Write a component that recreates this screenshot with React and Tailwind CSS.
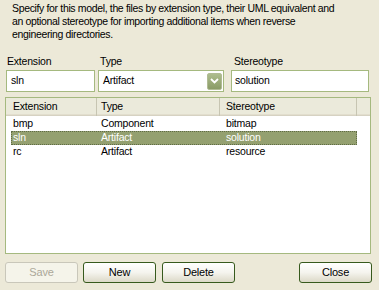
const ROWS = [
  { ext: "bmp", type: "Component", stereo: "bitmap" },
  { ext: "sln", type: "Artifact", stereo: "solution", selected: true },
  { ext: "rc", type: "Artifact", stereo: "resource" },
];

const XpButton = ({ children, disabled, className = "" }) => (
  <button
    type="button"
    className={`h-[21px] w-[73px] rounded-[3px] border text-[11px] leading-none ${
      disabled
        ? "border-[#c9c7ba] bg-[#f5f4ea] text-[#aca899]"
        : "border-[#375a1d] bg-gradient-to-b from-[#ffffff] via-[#f5f4ee] to-[#dcd9c8] text-black"
    } ${className}`}
  >
    {children}
  </button>
);

const Chevron = () => (
  <svg width="9" height="6" viewBox="0 0 9 6">
    <path d="M1 1 L4.5 4.5 L8 1" fill="none" stroke="#ffffff" strokeWidth="1.8" />
  </svg>
);

export default function App() {
  return (
    <div
      className="relative h-[290px] w-[379px] overflow-hidden bg-[#ece9d8] text-[10.5px] tracking-[-0.2px] text-black"
      style={{ fontFamily: '"Liberation Sans", Arial, sans-serif' }}
    >
      {/* Description */}
      <p className="pl-[12px] pt-[2px] leading-[13px] tracking-[-0.35px]">
        Specify for this model, the files by extension type, their UML equivalent and
        <br />
        an optional stereotype for importing additional items when reverse
        <br />
        engineering directories.
      </p>

      {/* Fields */}
      <div className="mt-[14px] flex pl-[6px]">
        <div className="w-[89px]">
          <div className="pl-[1px] leading-[13px]">Extension</div>
          <div className="mt-[2px] flex h-[22px] items-center border border-[#a5b97f] bg-white pl-[4px]">
            sln
          </div>
        </div>
        <div className="ml-[3px] w-[126px]">
          <div className="pl-[2px] leading-[13px]">Type</div>
          <div className="mt-[2px] flex h-[22px] items-center justify-between border border-[#a5b97f] bg-white pl-[4px] pr-px">
            <span>Artifact</span>
            <span className="flex h-[17px] w-[15px] items-center justify-center rounded-[2px] border border-[#b0bb94] bg-gradient-to-b from-[#aebd8e] to-[#8a9b66]">
              <Chevron />
            </span>
          </div>
        </div>
        <div className="ml-[7px] w-[138px]">
          <div className="pl-[3px] leading-[13px]">Stereotype</div>
          <div className="mt-[2px] flex h-[22px] items-center border border-[#a5b97f] bg-white pl-[3px]">
            solution
          </div>
        </div>
      </div>

      {/* List */}
      <div className="ml-[5px] mt-[5px] h-[157px] w-[366px] border border-[#a5b97f] bg-white">
        <div className="flex h-[18px] bg-[#ebeadb] shadow-[inset_0_-1px_0_#d6d2c2,inset_0_-2px_0_#e2dece]">
          <div className="flex w-[91px] items-center border-r border-[#c7c5b2] pl-[7px]">Extension</div>
          <div className="flex w-[123px] items-center border-r border-[#c7c5b2] pl-[4px]">Type</div>
          <div className="flex w-[137px] items-center border-r border-[#c7c5b2] pl-[6px]">Stereotype</div>
          <div className="flex-1" />
        </div>
        <div className="pt-px">
          {ROWS.map((r) => (
            <div key={r.ext} className="flex h-[14px] items-center">
              <div className="w-[5px]" />
              <div
                className={`flex h-full w-[346px] items-center ${
                  r.selected ? "bg-[#94a070] text-white outline-1 outline-dotted outline-[#5f6b45] -outline-offset-1" : ""
                }`}
              >
                <div className="w-[86px] pl-[2px]">{r.ext}</div>
                <div className="w-[123px] pl-[4px]">{r.type}</div>
                <div className="pl-[6px]">{r.stereo}</div>
              </div>
            </div>
          ))}
        </div>
      </div>

      {/* Buttons */}
      <div className="mt-[8px] flex pl-[5px]">
        <XpButton disabled>Save</XpButton>
        <XpButton className="ml-[5px]">New</XpButton>
        <XpButton className="ml-[6px]">Delete</XpButton>
        <XpButton className="ml-[64px]">Close</XpButton>
      </div>
    </div>
  );
}
